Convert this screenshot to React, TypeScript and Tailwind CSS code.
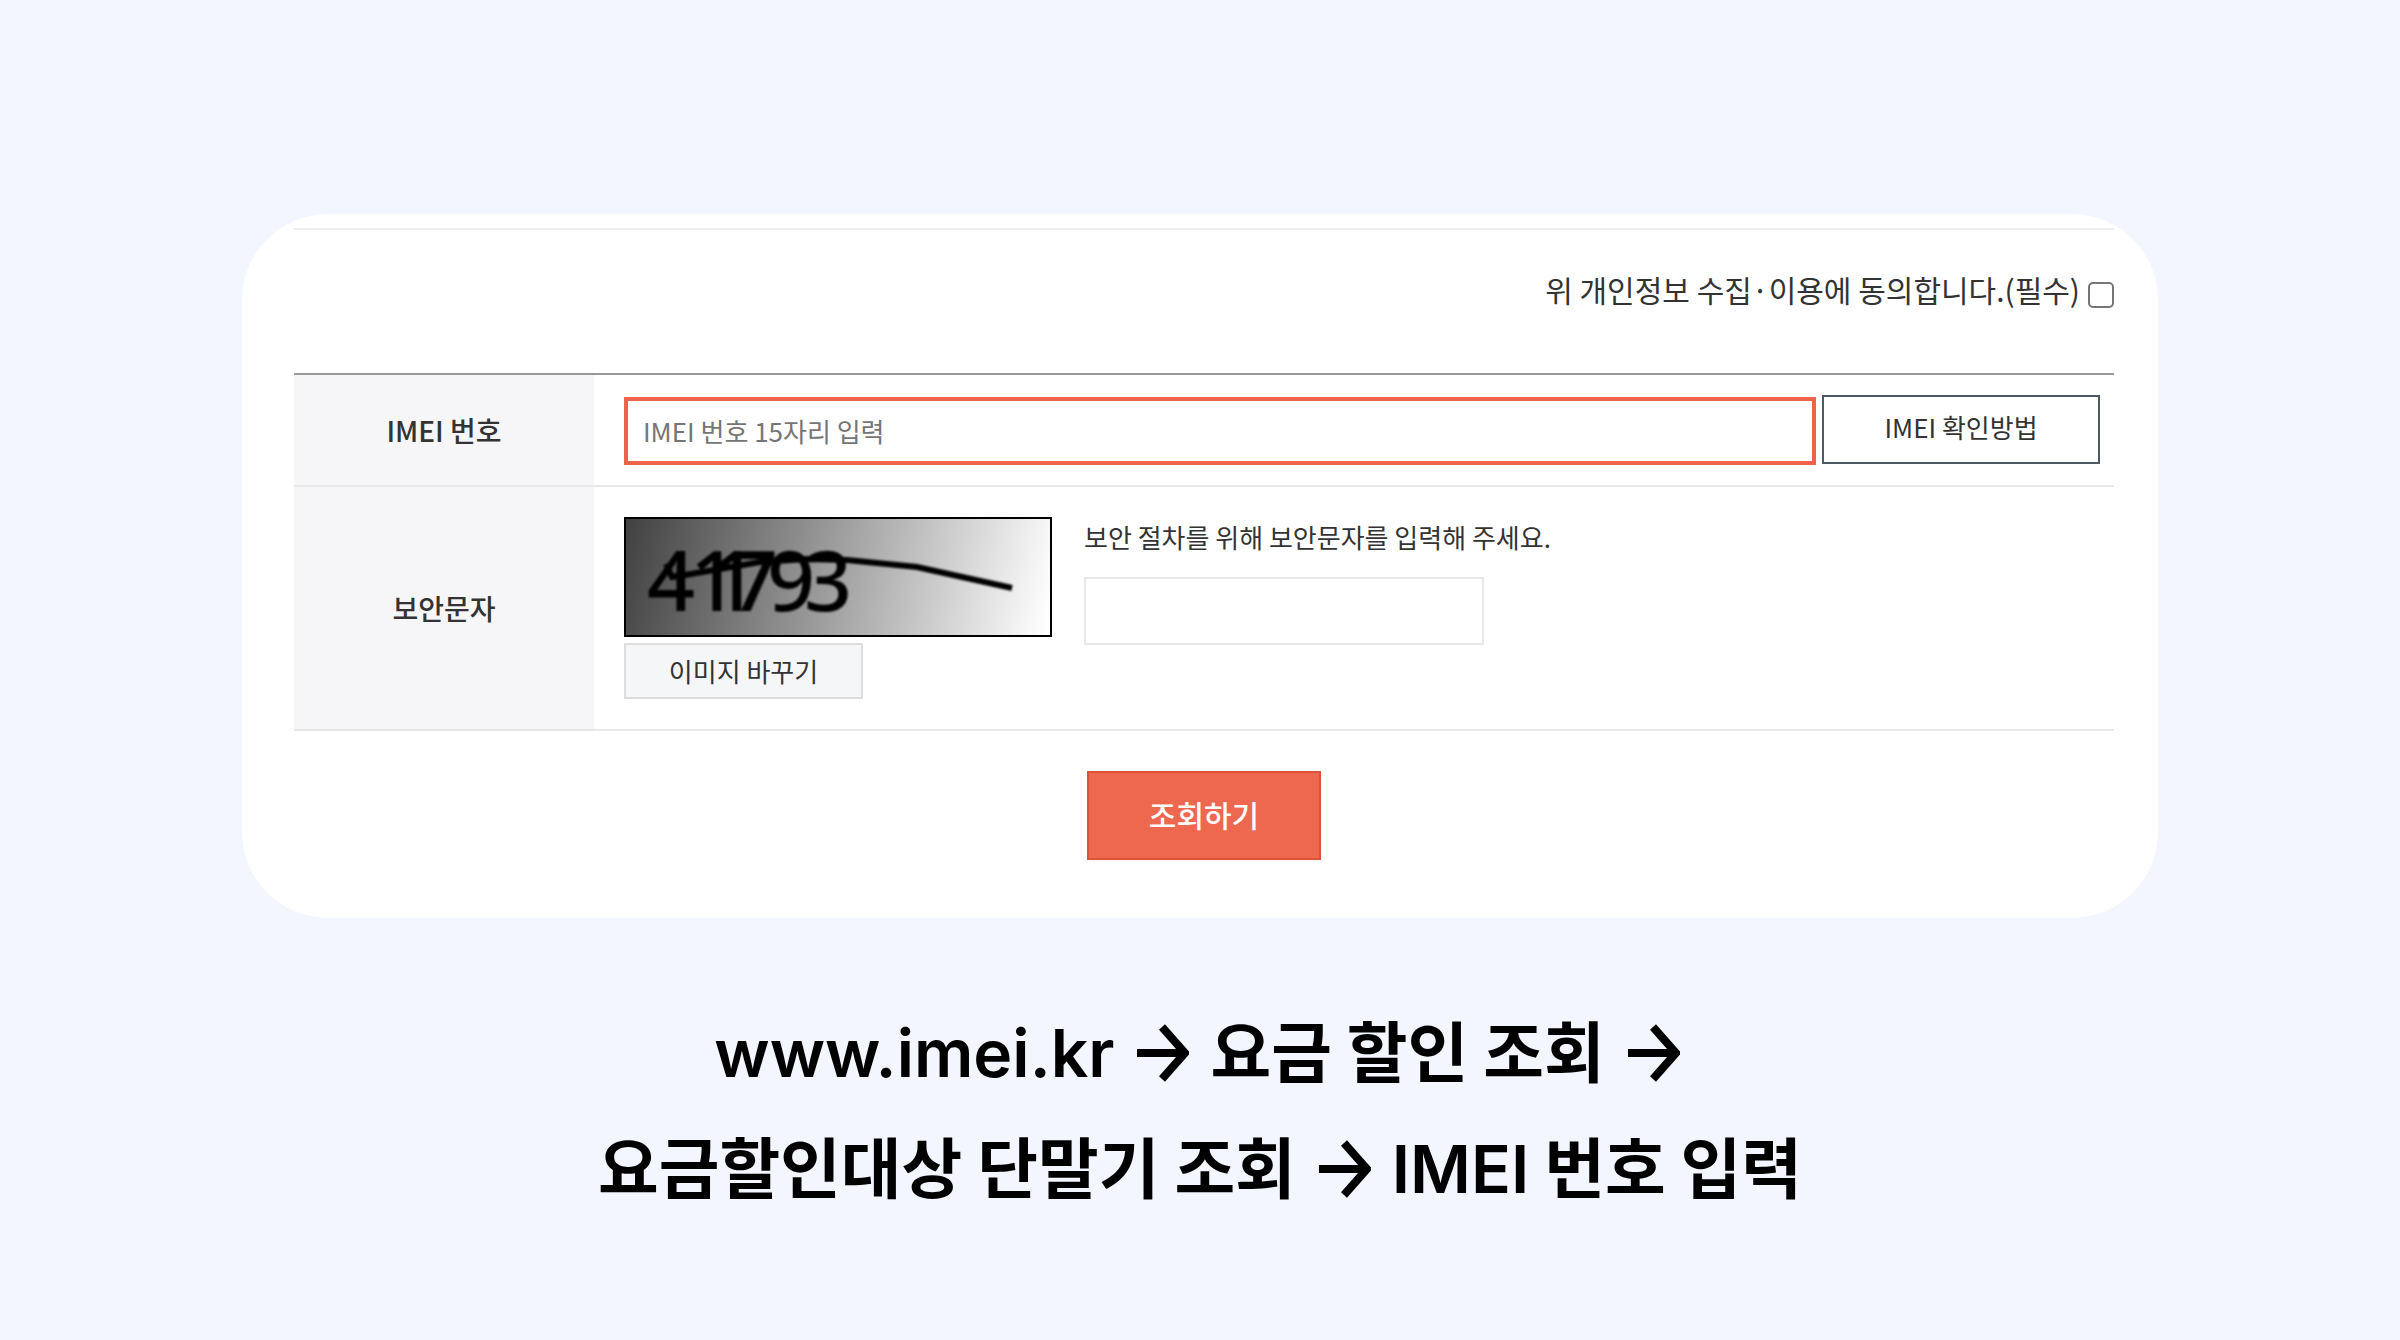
const CaptchaImage = () => (
  <svg className="block h-[120px] w-[428px]" viewBox="0 0 428 120" role="img" aria-label="보안문자 이미지">
    <defs>
      <linearGradient id="captcha-bg" gradientUnits="userSpaceOnUse" x1="0" y1="0" x2="428" y2="90">
        <stop offset="0" stopColor="#404040" />
        <stop offset="1" stopColor="#ffffff" />
      </linearGradient>
      <filter id="captcha-soft">
        <feGaussianBlur stdDeviation="0.8" />
      </filter>
    </defs>
    <rect x="1" y="1" width="426" height="118" fill="url(#captcha-bg)" stroke="#000" strokeWidth="2" />
    <g filter="url(#captcha-soft)">
      <text x="23 66 86 106 143 180" y="94" fontSize="84" fontWeight="500" className="font-['Noto_Sans',sans-serif]">
        411793
      </text>
      <path d="M42 47 L48 60 L61 58 L136 45 L183 42 L223 43 L293 50 L388 71" fill="none" stroke="#000" strokeWidth="6" />
    </g>
  </svg>
);

const LookupForm = () => (
  <form className="text-[#333]" onSubmit={(e) => e.preventDefault()}>
    <div className="flex items-center justify-end gap-2 border-t-2 border-[#eee] pt-9">
      <label htmlFor="agree" className="text-[30px] leading-[46px]">
        위 개인정보 수집·이용에 동의합니다.(필수)
      </label>
      <input
        id="agree"
        type="checkbox"
        className="mt-3 size-[26px] appearance-none rounded-[5px] border-2 border-[#767676] bg-white"
      />
    </div>

    <table className="mt-[61px] w-full border-collapse border-t-2 border-[#999]">
      <tbody>
        <tr className="border-b-2 border-[#e8e8e8]">
          <th scope="row" className="w-[300px] bg-[#f6f6f9] text-[28px] font-medium">
            <label htmlFor="imei">IMEI 번호</label>
          </th>
          <td className="py-5 pr-3.5 pl-[30px]">
            <div className="flex items-start gap-1.5">
              <input
                id="imei"
                type="text"
                placeholder="IMEI 번호 15자리 입력"
                className="mt-0.5 h-[68px] min-w-0 grow border-4 border-[#ed6449] px-[15px] pb-0.5 text-[26px] placeholder:text-[#757575]"
              />
              <button type="button" className="h-[69px] w-[278px] border-2 border-[#505a66] pb-1.5 text-[26px]">
                IMEI 확인방법
              </button>
            </div>
          </td>
        </tr>
        <tr className="border-b-2 border-[#e8e8e8]">
          <th scope="row" className="bg-[#f6f6f9] text-[28px] font-medium">
            <label htmlFor="captcha">보안문자</label>
          </th>
          <td className="py-[30px] pr-3.5 pl-[30px]">
            <div className="flex gap-8">
              <div>
                <CaptchaImage />
                <button type="button" className="mt-1.5 h-14 w-[239px] border-2 border-[#ddd] bg-[#f5f6f8] pb-0.5 text-[26px]">
                  이미지 바꾸기
                </button>
              </div>
              <div>
                <p className="text-[26px] leading-10">보안 절차를 위해 보안문자를 입력해 주세요.</p>
                <input id="captcha" type="text" className="mt-5 h-[68px] w-[400px] border-2 border-[#e8e8e8] px-4 text-[26px]" />
              </div>
            </div>
          </td>
        </tr>
      </tbody>
    </table>

    <div className="mt-10 flex justify-center">
      <button
        type="submit"
        className="h-[89px] w-[234px] border-2 border-[#df523a] bg-[#ee6850] pb-0.5 text-[30px] font-medium text-white"
      >
        조회하기
      </button>
    </div>
  </form>
);

const Arrow = () => (
  <svg className="mr-1.5 ml-2 inline-block h-[60px] w-[52px] align-[-6px]" viewBox="0 0 52 60" aria-hidden="true">
    <path d="M0 30 H48 M25 4 L48 30 L25 56" fill="none" stroke="#000" strokeWidth="8" />
  </svg>
);

const App = () => {
  return (
    <main className="min-h-screen bg-[#f3f5ff] px-10 pt-[214px] pb-24 font-['Noto_Sans_CJK_KR',sans-serif]">
      <section className="mx-auto max-w-[1916px] overflow-hidden rounded-[86px] bg-white pt-3.5 pr-11 pb-[58px] pl-[52px]">
        <LookupForm />
      </section>

      <h1 className="mt-[72px] text-center text-[66px] leading-[116px] font-bold text-black">
        <span className="font-['Inter',sans-serif] leading-none font-semibold">www.imei.kr</span> <Arrow /> 요금 할인 조회{' '}
        <Arrow />
        <br />
        요금할인대상 단말기 조회 <Arrow />{' '}
        <span className="font-['Inter',sans-serif] leading-none font-semibold">IMEI</span> 번호 입력
      </h1>
    </main>
  );
};

export default App;
